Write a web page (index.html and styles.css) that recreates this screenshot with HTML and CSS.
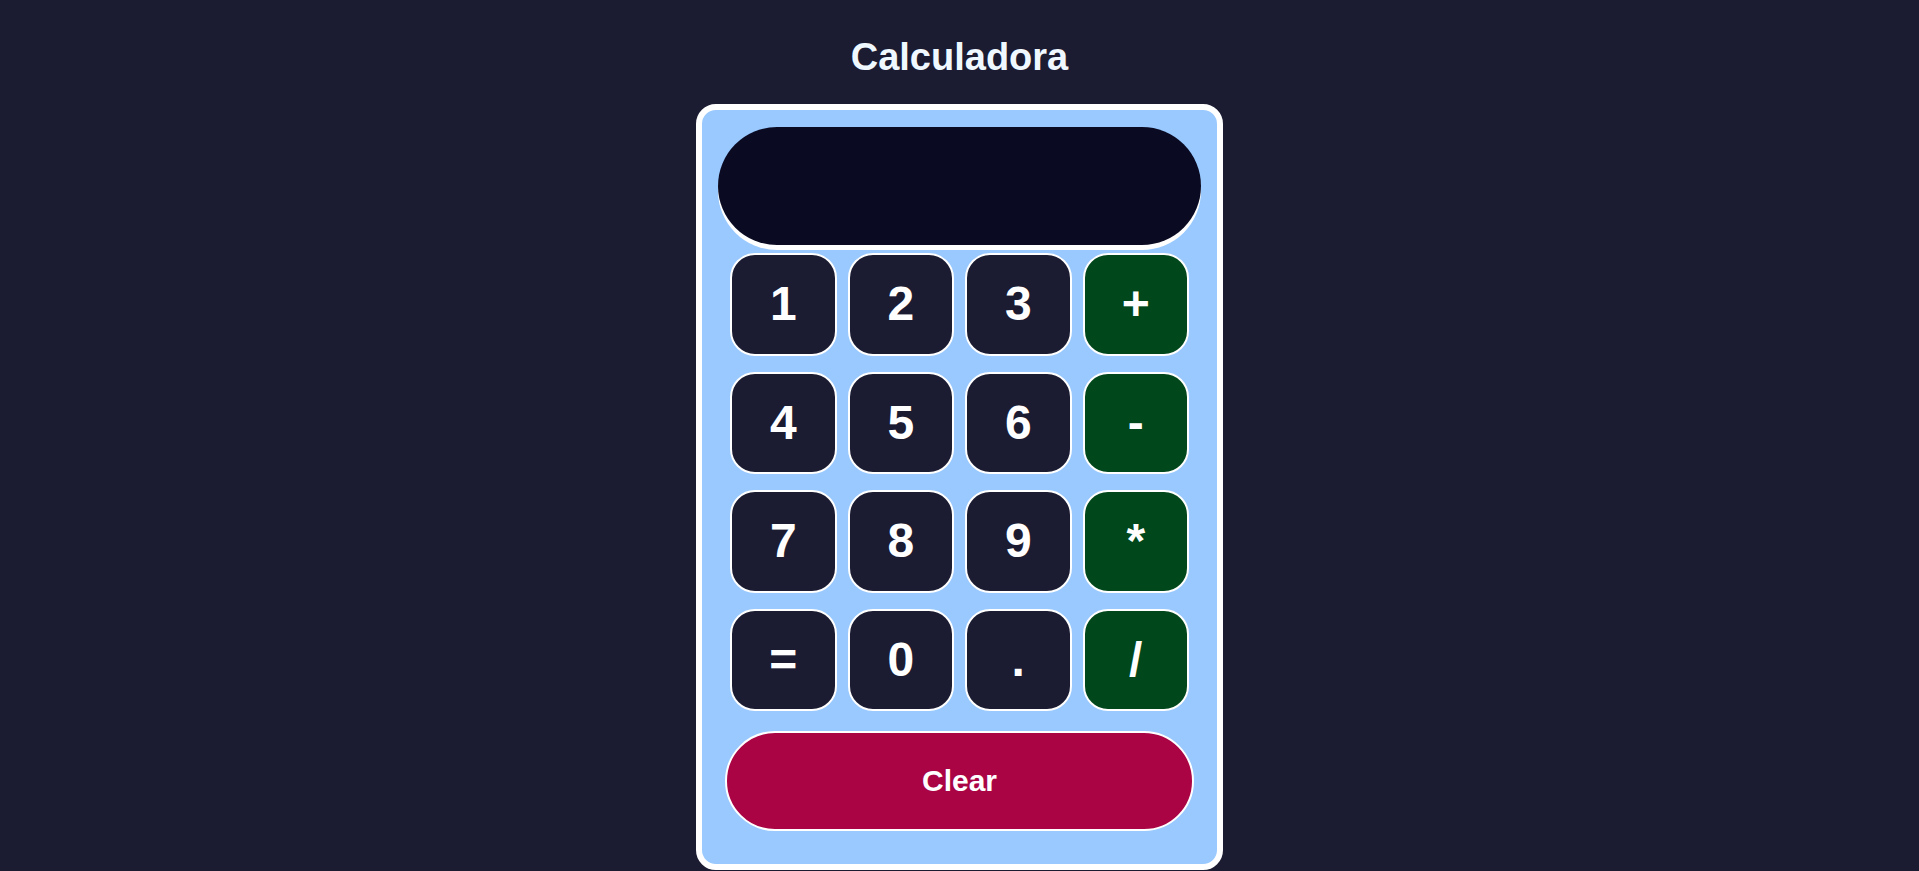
FILE: index.html
```html
<!DOCTYPE html>
<html lang="pt">
<head>
<meta charset="utf-8">
<title>Calculadora</title>
<link rel="stylesheet" href="styles.css">
</head>
<body>
  <h1 class="title">Calculadora</h1>
  <div class="calculator">
    <div class="display"></div>
    <div class="keypad">
      <button class="key">1</button>
      <button class="key">2</button>
      <button class="key">3</button>
      <button class="key op">+</button>
      <button class="key">4</button>
      <button class="key">5</button>
      <button class="key">6</button>
      <button class="key op">-</button>
      <button class="key">7</button>
      <button class="key">8</button>
      <button class="key">9</button>
      <button class="key op">*</button>
      <button class="key">=</button>
      <button class="key">0</button>
      <button class="key">.</button>
      <button class="key op">/</button>
    </div>
    <button class="clear">Clear</button>
  </div>
</body>
</html>
```

FILE: styles.css
```css
* {
  box-sizing: border-box;
}

html, body {
  margin: 0;
  padding: 0;
}

body {
  background: #1b1b32;
  font-family: "Liberation Sans", Arial, sans-serif;
  display: flex;
  flex-direction: column;
  align-items: center;
  padding-top: 35px;
  min-height: 871px;
}

.title {
  margin: 0 0 25px;
  font-size: 38px;
  line-height: 44px;
  font-weight: bold;
  color: #f0f8ff;
}

.calculator {
  width: 527px;
  background: #99c9ff;
  border: 6px solid #ffffff;
  border-radius: 20px;
  padding: 17px 16px 33px;
  display: flex;
  flex-direction: column;
  align-items: center;
}

.display {
  width: 483px;
  height: 118px;
  align-self: flex-start;
  background: #0a0a23;
  border-radius: 60px;
  box-shadow: 0 5px 0 #ffffff;
  margin-bottom: 8px;
}

.keypad {
  display: grid;
  grid-template-columns: repeat(4, 106.5px);
  grid-auto-rows: 102.5px;
  column-gap: 11px;
  row-gap: 16px;
  margin-bottom: 20px;
}

.key {
  display: flex;
  align-items: center;
  justify-content: center;
  margin: 0;
  padding: 0;
  background: #1b1b32;
  color: #ffffff;
  border: 2px solid #ffffff;
  border-radius: 25px;
  font-family: "Liberation Sans", Arial, sans-serif;
  font-size: 48px;
  font-weight: bold;
  line-height: 1;
}

.key.op {
  background: #00471b;
}

.clear {
  width: 469.5px;
  height: 100px;
  margin: 0;
  padding: 0;
  background: #aa0445;
  color: #ffffff;
  border: 2px solid #ffffff;
  border-radius: 50px;
  font-family: "Liberation Sans", Arial, sans-serif;
  font-size: 30px;
  font-weight: bold;
}
```
